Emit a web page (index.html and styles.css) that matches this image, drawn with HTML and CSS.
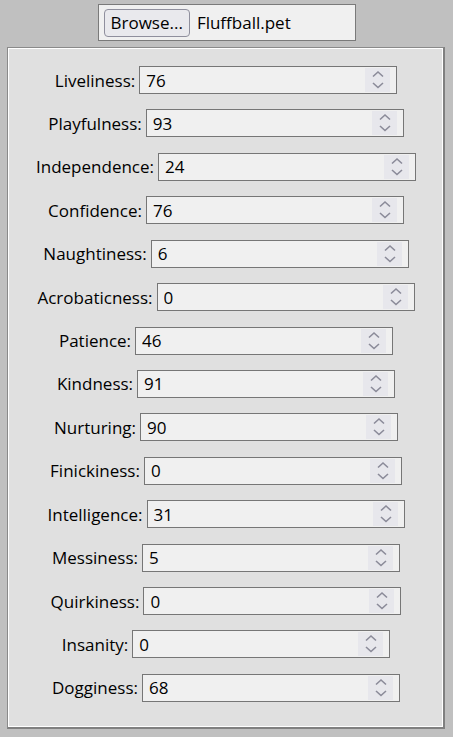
FILE: index.html
```html
<!DOCTYPE html>
<html>
<head>
<meta charset="utf-8">
<link rel="stylesheet" href="styles.css">
</head>
<body>
<div class="file-box">
  <button class="browse">Browse...</button>
  <span class="file-name">Fluffball.pet</span>
</div>
<div class="panel">
  <div class="row"><label>Liveliness:</label><div class="field"><input value="76"><span class="spin"><svg viewBox="0 0 25 24" width="25" height="24"><path d="M8 8.5 L13 4 L18 8.5 M8 15 L13 19.5 L18 15"/></svg></span></div></div>
  <div class="row"><label>Playfulness:</label><div class="field"><input value="93"><span class="spin"><svg viewBox="0 0 25 24" width="25" height="24"><path d="M8 8.5 L13 4 L18 8.5 M8 15 L13 19.5 L18 15"/></svg></span></div></div>
  <div class="row"><label>Independence:</label><div class="field"><input value="24"><span class="spin"><svg viewBox="0 0 25 24" width="25" height="24"><path d="M8 8.5 L13 4 L18 8.5 M8 15 L13 19.5 L18 15"/></svg></span></div></div>
  <div class="row"><label>Confidence:</label><div class="field"><input value="76"><span class="spin"><svg viewBox="0 0 25 24" width="25" height="24"><path d="M8 8.5 L13 4 L18 8.5 M8 15 L13 19.5 L18 15"/></svg></span></div></div>
  <div class="row"><label>Naughtiness:</label><div class="field"><input value="6"><span class="spin"><svg viewBox="0 0 25 24" width="25" height="24"><path d="M8 8.5 L13 4 L18 8.5 M8 15 L13 19.5 L18 15"/></svg></span></div></div>
  <div class="row"><label>Acrobaticness:</label><div class="field"><input value="0"><span class="spin"><svg viewBox="0 0 25 24" width="25" height="24"><path d="M8 8.5 L13 4 L18 8.5 M8 15 L13 19.5 L18 15"/></svg></span></div></div>
  <div class="row"><label>Patience:</label><div class="field"><input value="46"><span class="spin"><svg viewBox="0 0 25 24" width="25" height="24"><path d="M8 8.5 L13 4 L18 8.5 M8 15 L13 19.5 L18 15"/></svg></span></div></div>
  <div class="row"><label>Kindness:</label><div class="field"><input value="91"><span class="spin"><svg viewBox="0 0 25 24" width="25" height="24"><path d="M8 8.5 L13 4 L18 8.5 M8 15 L13 19.5 L18 15"/></svg></span></div></div>
  <div class="row"><label>Nurturing:</label><div class="field"><input value="90"><span class="spin"><svg viewBox="0 0 25 24" width="25" height="24"><path d="M8 8.5 L13 4 L18 8.5 M8 15 L13 19.5 L18 15"/></svg></span></div></div>
  <div class="row"><label>Finickiness:</label><div class="field"><input value="0"><span class="spin"><svg viewBox="0 0 25 24" width="25" height="24"><path d="M8 8.5 L13 4 L18 8.5 M8 15 L13 19.5 L18 15"/></svg></span></div></div>
  <div class="row"><label>Intelligence:</label><div class="field"><input value="31"><span class="spin"><svg viewBox="0 0 25 24" width="25" height="24"><path d="M8 8.5 L13 4 L18 8.5 M8 15 L13 19.5 L18 15"/></svg></span></div></div>
  <div class="row"><label>Messiness:</label><div class="field"><input value="5"><span class="spin"><svg viewBox="0 0 25 24" width="25" height="24"><path d="M8 8.5 L13 4 L18 8.5 M8 15 L13 19.5 L18 15"/></svg></span></div></div>
  <div class="row"><label>Quirkiness:</label><div class="field"><input value="0"><span class="spin"><svg viewBox="0 0 25 24" width="25" height="24"><path d="M8 8.5 L13 4 L18 8.5 M8 15 L13 19.5 L18 15"/></svg></span></div></div>
  <div class="row"><label>Insanity:</label><div class="field"><input value="0"><span class="spin"><svg viewBox="0 0 25 24" width="25" height="24"><path d="M8 8.5 L13 4 L18 8.5 M8 15 L13 19.5 L18 15"/></svg></span></div></div>
  <div class="row"><label>Dogginess:</label><div class="field"><input value="68"><span class="spin"><svg viewBox="0 0 25 24" width="25" height="24"><path d="M8 8.5 L13 4 L18 8.5 M8 15 L13 19.5 L18 15"/></svg></span></div></div>
</div>
</body>
</html>
```

FILE: styles.css
```css
html, body {
  margin: 0;
  padding: 0;
  background: #c0c0c0;
}
body {
  font-family: "Open Sans", "Noto Sans", sans-serif;
  font-size: 17px;
  color: #000;
  padding-top: 4px;
  padding-bottom: 8px;
}
.file-box {
  box-sizing: border-box;
  width: 258px;
  height: 37px;
  margin: 0 auto;
  border: 1px solid #7a7a7a;
  background: #f0f0f0;
  display: flex;
  align-items: center;
  padding: 0 5px;
  gap: 7px;
}
.browse {
  box-sizing: border-box;
  height: 28px;
  padding: 0 6px;
  border: 1px solid #8f8f9d;
  border-radius: 4px;
  background: #e9e9ed;
  font-family: inherit;
  font-size: 17px;
  color: #000;
}
.file-name {
  font-size: 17px;
}
.panel {
  margin: 6px 8px 0 7px;
  background: #e0e0e0;
  border-top: 1px solid #8a8a8a;
  border-left: 1px solid #8a8a8a;
  border-right: 2px solid #808080;
  border-bottom: 2px solid #808080;
  box-shadow: inset 1px 1px 0 #ffffff, inset -1px -1px 0 #ffffff;
  padding: 18px 0 25px 1px;
  display: flex;
  flex-direction: column;
  gap: 15.43px;
}
.row {
  display: flex;
  justify-content: center;
  align-items: center;
  gap: 4px;
}
.row label {
  font-size: 17px;
  white-space: nowrap;
}
.field {
  box-sizing: border-box;
  width: 258px;
  height: 28px;
  border: 1px solid #767676;
  background: #f0f0f0;
  display: flex;
  align-items: center;
}
.field input {
  flex: 1;
  min-width: 0;
  border: none;
  background: transparent;
  font-family: inherit;
  font-size: 17px;
  color: #000;
  padding: 0 0 0 6px;
  outline: none;
}
.spin {
  width: 25px;
  height: 24px;
  margin-right: 6px;
  background: #e7e7ec;
  display: flex;
}
.spin path {
  fill: none;
  stroke: #8b8b99;
  stroke-width: 1.6;
}
```
